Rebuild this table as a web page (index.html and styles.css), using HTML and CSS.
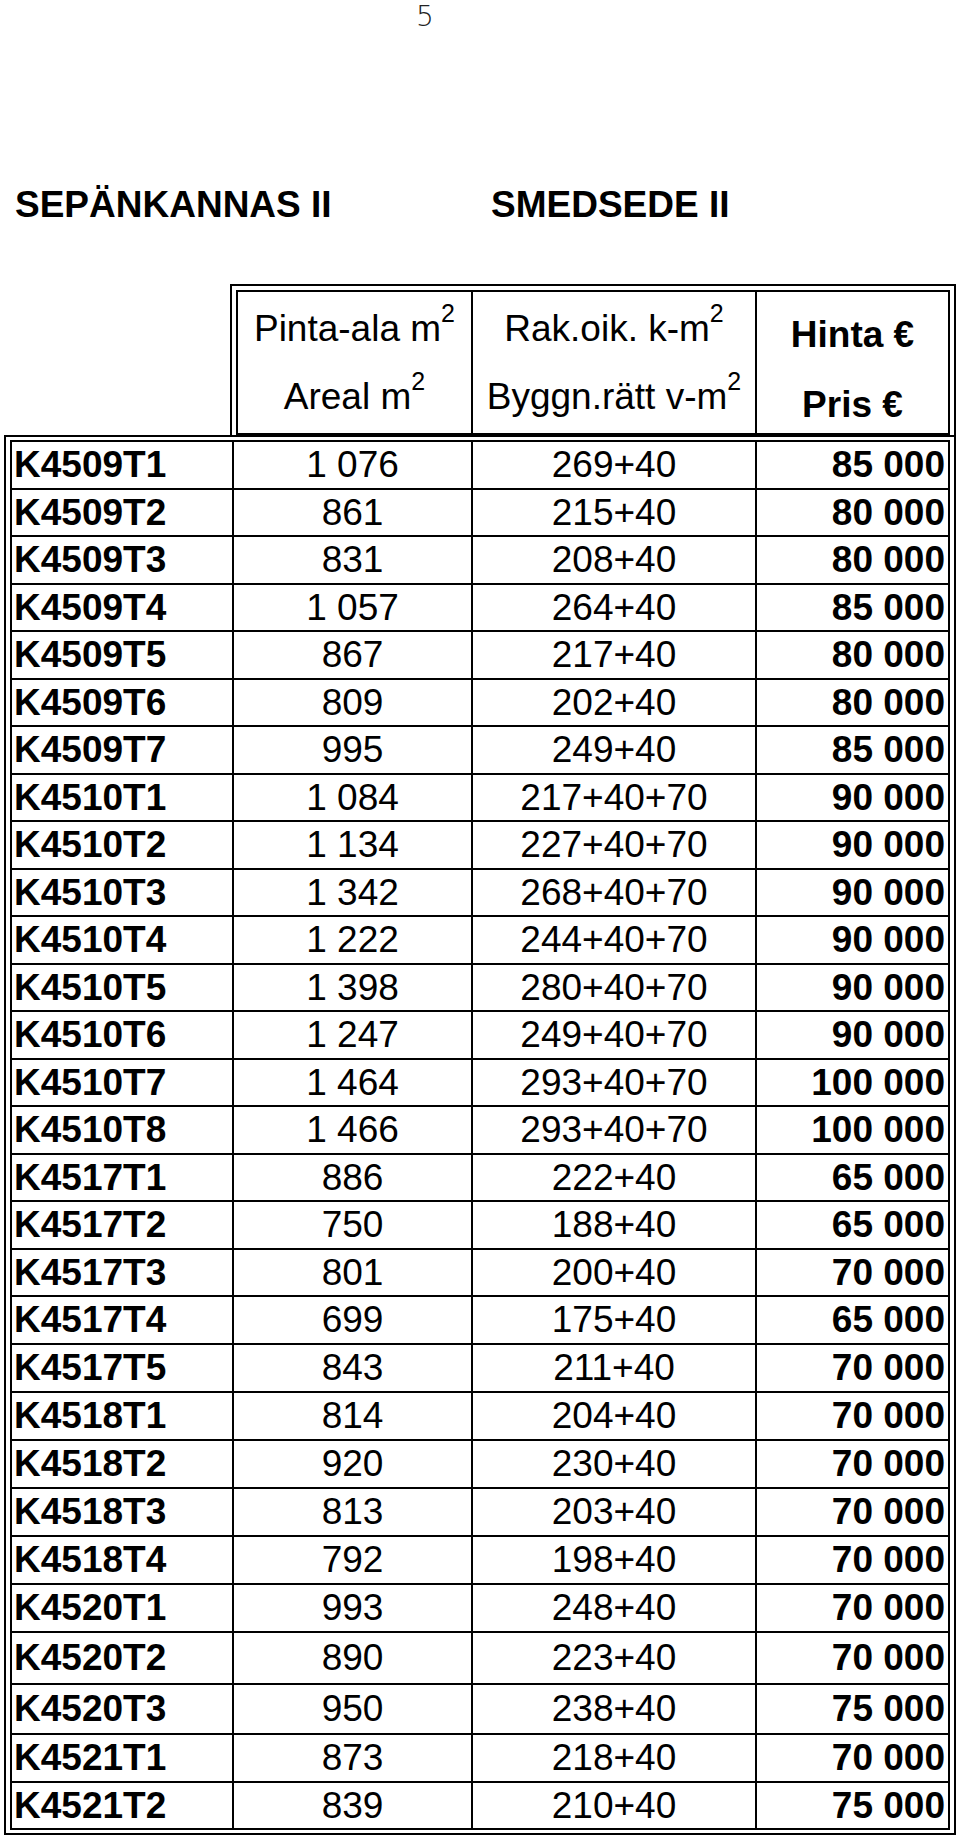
FILE: index.html
```html
<!DOCTYPE html>
<html lang="fi">
<head>
<meta charset="utf-8">
<title>Sepänkannas II</title>
<link rel="stylesheet" href="styles.css">
</head>
<body>
<div class="page">
  <div class="pageno">5</div>
  <div class="titles"><span class="t1">SEPÄNKANNAS II</span><span class="t2">SMEDSEDE II</span></div>
  <div class="hdr-wrap">
    <div class="hdr">
      <div class="hcell"><div>Pinta-ala m<sup>2</sup></div><div>Areal m<sup>2</sup></div></div>
      <div class="hcell"><div>Rak.oik. k-m<sup>2</sup></div><div>Byggn.rätt v-m<sup>2</sup></div></div>
      <div class="hcell bold"><div>Hinta €</div><div>Pris €</div></div>
    </div>
  </div>
  <div class="data-wrap">
    <div class="data">
      <div class="row"><div class="c id">K4509T1</div><div class="c">1 076</div><div class="c">269+40</div><div class="c price">85 000</div></div>
      <div class="row"><div class="c id">K4509T2</div><div class="c">861</div><div class="c">215+40</div><div class="c price">80 000</div></div>
      <div class="row"><div class="c id">K4509T3</div><div class="c">831</div><div class="c">208+40</div><div class="c price">80 000</div></div>
      <div class="row"><div class="c id">K4509T4</div><div class="c">1 057</div><div class="c">264+40</div><div class="c price">85 000</div></div>
      <div class="row"><div class="c id">K4509T5</div><div class="c">867</div><div class="c">217+40</div><div class="c price">80 000</div></div>
      <div class="row"><div class="c id">K4509T6</div><div class="c">809</div><div class="c">202+40</div><div class="c price">80 000</div></div>
      <div class="row"><div class="c id">K4509T7</div><div class="c">995</div><div class="c">249+40</div><div class="c price">85 000</div></div>
      <div class="row"><div class="c id">K4510T1</div><div class="c">1 084</div><div class="c">217+40+70</div><div class="c price">90 000</div></div>
      <div class="row"><div class="c id">K4510T2</div><div class="c">1 134</div><div class="c">227+40+70</div><div class="c price">90 000</div></div>
      <div class="row"><div class="c id">K4510T3</div><div class="c">1 342</div><div class="c">268+40+70</div><div class="c price">90 000</div></div>
      <div class="row"><div class="c id">K4510T4</div><div class="c">1 222</div><div class="c">244+40+70</div><div class="c price">90 000</div></div>
      <div class="row"><div class="c id">K4510T5</div><div class="c">1 398</div><div class="c">280+40+70</div><div class="c price">90 000</div></div>
      <div class="row"><div class="c id">K4510T6</div><div class="c">1 247</div><div class="c">249+40+70</div><div class="c price">90 000</div></div>
      <div class="row"><div class="c id">K4510T7</div><div class="c">1 464</div><div class="c">293+40+70</div><div class="c price">100 000</div></div>
      <div class="row"><div class="c id">K4510T8</div><div class="c">1 466</div><div class="c">293+40+70</div><div class="c price">100 000</div></div>
      <div class="row"><div class="c id">K4517T1</div><div class="c">886</div><div class="c">222+40</div><div class="c price">65 000</div></div>
      <div class="row"><div class="c id">K4517T2</div><div class="c">750</div><div class="c">188+40</div><div class="c price">65 000</div></div>
      <div class="row"><div class="c id">K4517T3</div><div class="c">801</div><div class="c">200+40</div><div class="c price">70 000</div></div>
      <div class="row"><div class="c id">K4517T4</div><div class="c">699</div><div class="c">175+40</div><div class="c price">65 000</div></div>
      <div class="row"><div class="c id">K4517T5</div><div class="c">843</div><div class="c">211+40</div><div class="c price">70 000</div></div>
      <div class="row"><div class="c id">K4518T1</div><div class="c">814</div><div class="c">204+40</div><div class="c price">70 000</div></div>
      <div class="row"><div class="c id">K4518T2</div><div class="c">920</div><div class="c">230+40</div><div class="c price">70 000</div></div>
      <div class="row"><div class="c id">K4518T3</div><div class="c">813</div><div class="c">203+40</div><div class="c price">70 000</div></div>
      <div class="row"><div class="c id">K4518T4</div><div class="c">792</div><div class="c">198+40</div><div class="c price">70 000</div></div>
      <div class="row"><div class="c id">K4520T1</div><div class="c">993</div><div class="c">248+40</div><div class="c price">70 000</div></div>
      <div class="row"><div class="c id">K4520T2</div><div class="c">890</div><div class="c">223+40</div><div class="c price">70 000</div></div>
      <div class="row"><div class="c id">K4520T3</div><div class="c">950</div><div class="c">238+40</div><div class="c price">75 000</div></div>
      <div class="row"><div class="c id">K4521T1</div><div class="c">873</div><div class="c">218+40</div><div class="c price">70 000</div></div>
      <div class="row"><div class="c id">K4521T2</div><div class="c">839</div><div class="c">210+40</div><div class="c price">75 000</div></div>
    </div>
  </div>
</div>
</body>
</html>
```

FILE: styles.css
```css
html, body {
  margin: 0;
  padding: 0;
  background: #fff;
  color: #000;
  font-family: "Liberation Sans", Arial, sans-serif;
}

.page {
  width: 960px;
}

.pageno {
  font-family: "DejaVu Sans", sans-serif;
  font-weight: 200;
  font-size: 28px;
  line-height: 32px;
  padding: 1px 0 0 416px;
  color: #222;
}

.titles {
  margin-top: 151px;
  padding-left: 15px;
  display: flex;
  font-weight: bold;
  font-size: 37px;
  line-height: 42px;
  white-space: nowrap;
}

.t1 {
  width: 476px;
}

.hdr-wrap {
  margin: 58px 0 0 230px;
  width: 714px;
  border: 2px solid #000;
  border-bottom: 0;
  padding: 4px 4px 0;
}

.hdr {
  display: grid;
  grid-template-columns: 233px 282px 191px;
  grid-template-rows: 141px;
  column-gap: 2px;
  background: #000;
  border: 2px solid #000;
}

.hcell {
  background: #fff;
  text-align: center;
  font-size: 37px;
  line-height: 68px;
  padding-top: 3px;
  box-sizing: border-box;
  white-space: nowrap;
}

.hcell.bold {
  font-weight: bold;
  line-height: 70px;
  padding-top: 8px;
}

sup {
  font-size: 25px;
  vertical-align: 19px;
  line-height: 0;
}

.data-wrap {
  margin-left: 4px;
  width: 940px;
  border: 2px solid #000;
  padding: 3px 4px;
}

.data {
  display: flex;
  flex-direction: column;
  gap: 2px;
  background: #000;
  border: 2px solid #000;
}

.row {
  display: grid;
  grid-template-columns: 220px 237px 282px 191px;
  column-gap: 2px;
  height: 46px;
}

.row:nth-child(even):nth-child(-n+18) {
  height: 45px;
}

.row:nth-child(26) {
  height: 50px;
}

.row:nth-child(27) {
  height: 48px;
}

.row:last-child {
  height: 45px;
}

.c {
  background: #fff;
  display: flex;
  align-items: center;
  justify-content: center;
  font-size: 37px;
  white-space: nowrap;
  overflow: hidden;
}

.c.id {
  justify-content: flex-start;
  padding-left: 2px;
  font-weight: bold;
}

.c.price {
  justify-content: flex-end;
  padding-right: 3px;
  font-weight: bold;
}
```
